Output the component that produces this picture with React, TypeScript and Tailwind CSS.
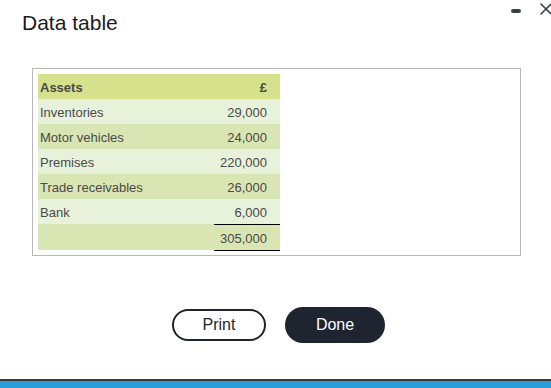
import React from 'react';

const rows = [
  { label: 'Inventories', value: '29,000' },
  { label: 'Motor vehicles', value: '24,000' },
  { label: 'Premises', value: '220,000' },
  { label: 'Trade receivables', value: '26,000' },
  { label: 'Bank', value: '6,000' },
];

const App = () => {
  return (
    <div className="relative flex flex-col h-[388px] w-[551px] bg-white overflow-hidden font-['Liberation_Sans',Arial,sans-serif]">
      {/* Window controls */}
      <div className="absolute top-[9px] left-[511px] w-[10px] h-[4px] rounded-sm bg-[#3a3f47]" />
      <svg className="absolute top-[2px] left-[539px]" width="14" height="14" viewBox="0 0 14 14">
        <path d="M2 2 L12 12 M12 2 L2 12" stroke="#3a3f47" strokeWidth="1.6" strokeLinecap="round" />
      </svg>

      {/* Title */}
      <h1 className="pl-[22px] pt-[10px] text-[21px] leading-[26px] text-[#1b1b1b]">Data table</h1>

      {/* Table box */}
      <div className="ml-[32px] mt-[32px] w-[489px] h-[188px] border border-[#b8b8b8] p-[5px]">
        <table className="border-collapse text-[13px] text-[#4a4a4a]">
          <thead>
            <tr className="h-[25px] bg-[#d5e18b]">
              <th className="w-[176px] pl-[2px] pt-[3px] text-left font-bold">Assets</th>
              <th className="w-[66px] pr-[13px] pt-[3px] text-right font-bold">£</th>
            </tr>
          </thead>
          <tbody>
            {rows.map((r, i) => (
              <tr key={r.label} className={i % 2 === 0 ? 'h-[25px] bg-[#e8f1da]' : 'h-[25px] bg-[#d9e5b2]'}>
                <td className="pl-[2px] pt-[3px]">{r.label}</td>
                <td
                  className={
                    i === rows.length - 1
                      ? 'pr-[13px] pt-[3px] text-right border-b border-black'
                      : 'pr-[13px] pt-[3px] text-right'
                  }
                >
                  {r.value}
                </td>
              </tr>
            ))}
            <tr className="h-[26px] bg-[#d9e5b2]">
              <td />
              <td className="pr-[13px] pt-[3px] text-right border-b border-black">305,000</td>
            </tr>
          </tbody>
        </table>
      </div>

      {/* Buttons */}
      <div className="mt-[51px] flex items-center justify-center gap-[19px] pl-[6px]">
        <button className="w-[94px] h-[32px] rounded-full border-2 border-[#1f2530] text-[16px] text-[#1f2530] bg-white">
          Print
        </button>
        <button className="w-[100px] h-[36px] rounded-full bg-[#1e2430] text-[16px] text-white">
          Done
        </button>
      </div>

      {/* Bottom bar */}
      <div className="mt-auto">
        <div className="h-[2px] bg-[#3b3b3b]" />
        <div className="h-[7px] bg-[#2a9ddb]" />
      </div>
    </div>
  );
};

export default App;
